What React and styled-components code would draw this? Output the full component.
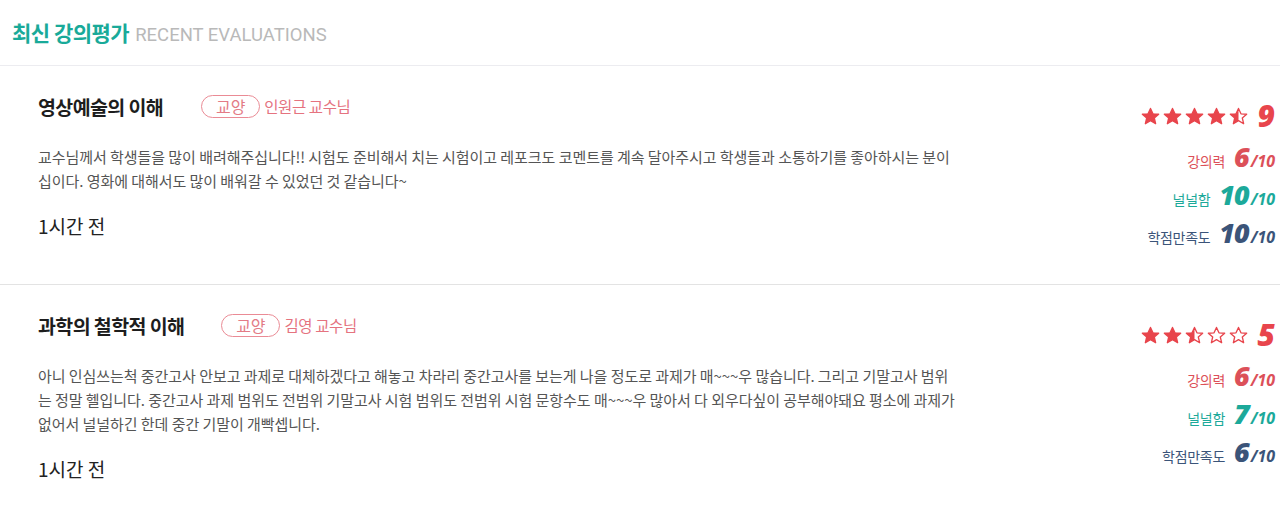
import styled, { createGlobalStyle } from 'styled-components'

const GlobalStyle = createGlobalStyle`
  body {
    margin: 0;
    background: #fff;
    font-family: "Noto Sans CJK KR", "Noto Sans", sans-serif;
  }
`

const Section = styled.section`
  width: 1280px;
`

const Header = styled.header`
  display: flex;
  align-items: baseline;
  gap: 6px;
  height: 66px;
  padding: 17px 0 0 12px;
  box-sizing: border-box;
  border-bottom: 1px solid #ececf0;
`

const HeaderTitle = styled.h2`
  margin: 0;
  font-size: 21px;
  font-weight: 700;
  letter-spacing: -0.5px;
  color: #19aa99;
`

const HeaderSub = styled.span`
  font-family: Roboto, "Liberation Sans", sans-serif;
  font-size: 18.5px;
  color: #b9b9b9;
`

const Card = styled.article`
  display: flex;
  justify-content: space-between;
  padding: 28px 5px 44px 38px;
  border-bottom: 1px solid #e3e3e3;
`

const Main = styled.div`
  width: 918px;
`

const TitleRow = styled.div`
  display: flex;
  align-items: center;
  height: 24px;
`

const CourseTitle = styled.h3`
  margin: 0 ${(p) => p.$gap}px 0 0;
  font-size: 19.5px;
  font-weight: 700;
  letter-spacing: -0.6px;
  color: #1d1d1d;
`

const Tag = styled.span`
  display: inline-flex;
  align-items: center;
  justify-content: center;
  width: 59px;
  height: 23px;
  box-sizing: border-box;
  border: 1.5px solid #ea8b95;
  border-radius: 12px;
  font-size: 16px;
  color: #e37b86;
  margin-right: 4px;
`

const Professor = styled.span`
  font-size: 15.5px;
  letter-spacing: -0.4px;
  color: #e5737f;
`

const Body = styled.p`
  margin: 27px 0 0;
  font-size: 15px;
  line-height: 24px;
  letter-spacing: -0.05px;
  color: #555;
`

const Time = styled.div`
  margin-top: 21px;
  font-size: 19px;
  line-height: 24px;
  color: #222;
`

const Side = styled.div`
  display: flex;
  flex-direction: column;
  align-items: flex-end;
  padding-top: 7px;
  margin-bottom: -12px;
`

const StarRow = styled.div`
  display: flex;
  align-items: center;
  height: 30px;
  margin-bottom: 7px;
`

const Stars = styled.div`
  display: flex;
  gap: 3px;
  margin-right: 10px;
`

const Score = styled.span`
  font-family: "Open Sans", "DejaVu Sans", sans-serif;
  font-style: italic;
  font-weight: 800;
  font-size: 30px;
  line-height: 30px;
  color: #e8454c;
`

const RateRow = styled.div`
  display: flex;
  align-items: baseline;
  height: 38px;
  line-height: 38px;
  color: ${(p) => p.$color};
`

const RateLabel = styled.span`
  font-size: 14px;
  letter-spacing: -0.3px;
  margin-right: 9px;
`

const RateValue = styled.span`
  font-family: "Open Sans", "DejaVu Sans", sans-serif;
  font-style: italic;
  font-weight: 800;
  font-size: 27px;
  letter-spacing: -1px;
`

const RateMax = styled.span`
  font-family: "Open Sans", "DejaVu Sans", sans-serif;
  font-style: italic;
  font-weight: 700;
  font-size: 16px;
  margin-left: 2px;
`

const STAR = '10,1.5 12.6,7.2 18.6,7.6 14,11.6 15.4,17.6 10,14.4 4.6,17.6 6,11.6 1.4,7.6 7.4,7.2'

function Star({ fill }) {
  return (
    <svg width="19" height="19" viewBox="0 0 20 20">
      <defs>
        <clipPath id="half">
          <rect x="0" y="0" width="10" height="20" />
        </clipPath>
      </defs>
      <polygon points={STAR} fill={fill === 'full' ? '#e8454c' : '#fff'} stroke="#e8454c" strokeWidth="1.4" strokeLinejoin="round" />
      {fill === 'half' && <polygon points={STAR} fill="#e8454c" clipPath="url(#half)" />}
    </svg>
  )
}

const reviews = [
  {
    title: '영상예술의 이해',
    gap: 38,
    prof: '인원근 교수님',
    body: '교수님께서 학생들을 많이 배려해주십니다!! 시험도 준비해서 치는 시험이고 레포크도 코멘트를 계속 달아주시고 학생들과 소통하기를 좋아하시는 분이십이다. 영화에 대해서도 많이 배워갈 수 있었던 것 같습니다~',
    stars: ['full', 'full', 'full', 'full', 'half'],
    score: 9,
    lecture: 6,
    easy: 10,
    grade: 10,
  },
  {
    title: '과학의 철학적 이해',
    gap: 37,
    prof: '김영 교수님',
    body: '아니 인심쓰는척 중간고사 안보고 과제로 대체하겠다고 해놓고 차라리 중간고사를 보는게 나을 정도로 과제가 매~~~우 많습니다. 그리고 기말고사 범위는 정말 헬입니다. 중간고사 과제 범위도 전범위 기말고사 시험 범위도 전범위 시험 문항수도 매~~~우 많아서 다 외우다싶이 공부해야돼요 평소에 과제가 없어서 널널하긴 한데 중간 기말이 개빡셉니다.',
    stars: ['full', 'full', 'half', 'empty', 'empty'],
    score: 5,
    lecture: 6,
    easy: 7,
    grade: 6,
  },
]

function App() {
  return (
    <Section>
      <GlobalStyle />
      <Header>
        <HeaderTitle>최신 강의평가</HeaderTitle>
        <HeaderSub>RECENT EVALUATIONS</HeaderSub>
      </Header>
      {reviews.map((r) => (
        <Card key={r.title}>
          <Main>
            <TitleRow>
              <CourseTitle $gap={r.gap}>{r.title}</CourseTitle>
              <Tag>교양</Tag>
              <Professor>{r.prof}</Professor>
            </TitleRow>
            <Body>{r.body}</Body>
            <Time>1시간 전</Time>
          </Main>
          <Side>
            <StarRow>
              <Stars>
                {r.stars.map((s, i) => (
                  <Star key={i} fill={s} />
                ))}
              </Stars>
              <Score>{r.score}</Score>
            </StarRow>
            <RateRow $color="#dc5059">
              <RateLabel>강의력</RateLabel>
              <RateValue>{r.lecture}</RateValue>
              <RateMax>/10</RateMax>
            </RateRow>
            <RateRow $color="#1ca99a">
              <RateLabel>널널함</RateLabel>
              <RateValue>{r.easy}</RateValue>
              <RateMax>/10</RateMax>
            </RateRow>
            <RateRow $color="#3b5479">
              <RateLabel>학점만족도</RateLabel>
              <RateValue>{r.grade}</RateValue>
              <RateMax>/10</RateMax>
            </RateRow>
          </Side>
        </Card>
      ))}
    </Section>
  )
}

export default App
